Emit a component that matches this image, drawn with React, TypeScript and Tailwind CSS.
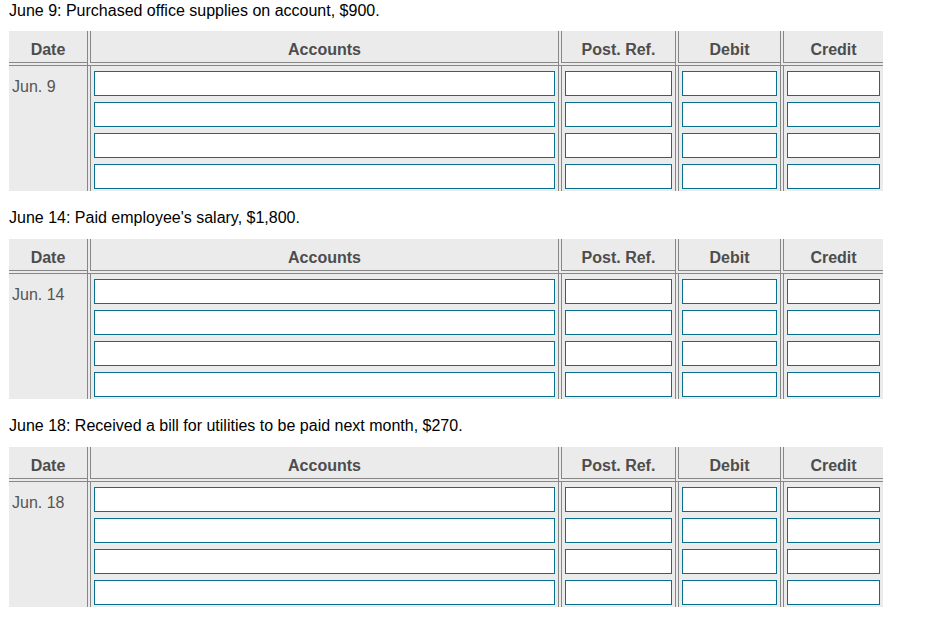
import React from "react";

type Entry = { title: string; date: string };

const entries: Entry[] = [
  { title: "June 9: Purchased office supplies on account, $900.", date: "Jun. 9" },
  { title: "June 14: Paid employee's salary, $1,800.", date: "Jun. 14" },
  { title: "June 18: Received a bill for utilities to be paid next month, $270.", date: "Jun. 18" },
];

const cols = ["Accounts", "Post. Ref.", "Debit", "Credit"];

function InputStack() {
  return (
    <div className="flex flex-col gap-[6px] px-[3px] pt-[5px] pb-[2px]">
      {[0, 1, 2, 3].map((i) => (
        <input
          key={i}
          type="text"
          className="block h-[25px] w-full border border-[#06718f] bg-white outline-none"
        />
      ))}
    </div>
  );
}

function JournalTable({ date }: { date: string }) {
  return (
    <div className="grid w-[874px] grid-cols-[78px_471px_117px_105px_103px] bg-[#ebebeb]">
      {/* header row */}
      <div className="h-[35px] border-b-4 border-double border-[#878787] pt-[10px] text-center font-bold leading-[18px] text-[#4d4d4d]">
        Date
      </div>
      {cols.map((c) => (
        <div
          key={c}
          className="h-[35px] border-b-4 border-l-4 border-double border-[#878787] pt-[10px] text-center font-bold leading-[18px] text-[#4d4d4d]"
        >
          {c}
        </div>
      ))}

      {/* body row */}
      <div className="pl-[3px] pt-[12px] leading-[18px] text-[#555555]">{date}</div>
      {cols.map((c) => (
        <div key={c} className="border-l-4 border-double border-[#878787]">
          <InputStack />
        </div>
      ))}
    </div>
  );
}

export default function App() {
  return (
    <div
      className="min-h-[619px] w-[943px] bg-white px-[9px] pt-[2px] text-[16px] text-black"
      style={{ fontFamily: '"Liberation Sans", Arial, sans-serif' }}
    >
      {entries.map((e, i) => (
        <div key={e.date} className={i === 0 ? "" : "mt-[18px]"}>
          <div className={`leading-[18px] ${i === 0 ? "h-[29px]" : "h-[30px]"}`}>{e.title}</div>
          <JournalTable date={e.date} />
        </div>
      ))}
    </div>
  );
}
